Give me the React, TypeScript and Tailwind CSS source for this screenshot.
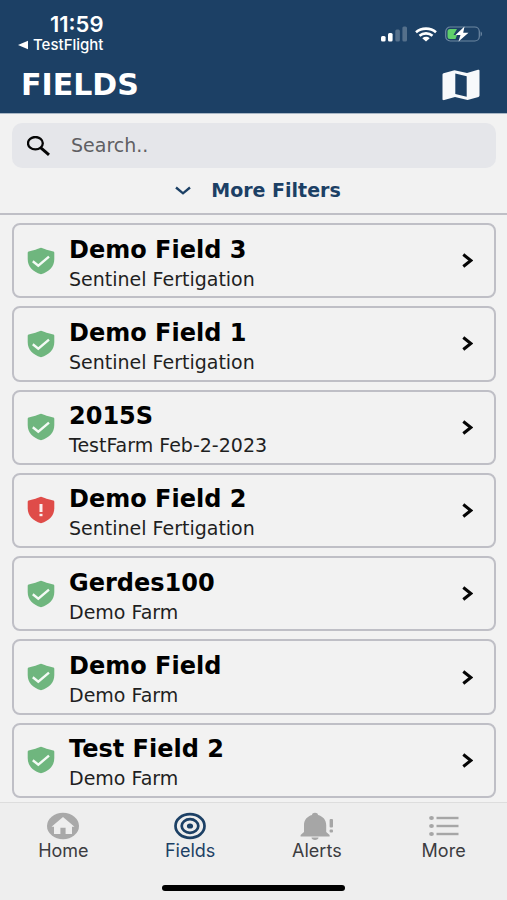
import { useState } from "react";

type FieldStatus = "ok" | "alert";

interface Field {
    id: number;
    name: string;
    farm: string;
    status: FieldStatus;
}

const fields: Field[] = [
    { id: 1, name: "Demo Field 3", farm: "Sentinel Fertigation", status: "ok" },
    { id: 2, name: "Demo Field 1", farm: "Sentinel Fertigation", status: "ok" },
    { id: 3, name: "2015S", farm: "TestFarm Feb-2-2023", status: "ok" },
    { id: 4, name: "Demo Field 2", farm: "Sentinel Fertigation", status: "alert" },
    { id: 5, name: "Gerdes100", farm: "Demo Farm", status: "ok" },
    { id: 6, name: "Demo Field", farm: "Demo Farm", status: "ok" },
    { id: 7, name: "Test Field 2", farm: "Demo Farm", status: "ok" },
];

const SignalIcon = () => (
    <svg width="26" height="16" viewBox="0 0 26 16" fill="#fff" aria-hidden="true">
        <rect x="0" y="10" width="4.6" height="5.5" rx="1.5" />
        <rect x="7" y="7" width="4.6" height="8.5" rx="1.5" />
        <rect x="14.3" y="3.5" width="4.6" height="12" rx="1.5" opacity="0.25" />
        <rect x="21.4" y="0.5" width="4.6" height="15" rx="1.5" opacity="0.25" />
    </svg>
);

const WifiIcon = () => (
    <svg width="22" height="15" viewBox="0 0 22 15" fill="none" stroke="#fff" strokeWidth="2.6" aria-hidden="true">
        <path d="M1 5.2C6.5 0.4 15.5 0.4 21 5.2" />
        <path d="M4.5 8.8C8.2 5.6 13.8 5.6 17.5 8.8" />
        <path d="M7.3 11.2C9.5 9.3 12.5 9.3 14.7 11.2L11 14.6Z" fill="#fff" stroke="none" />
    </svg>
);

const BatteryIcon = () => (
    <svg width="38" height="16" viewBox="0 0 38 16" aria-hidden="true">
        <rect x="0.7" y="1" width="33.6" height="14" rx="4.5" fill="none" stroke="#6d87a1" strokeWidth="1.2" />
        <path d="M35.6 5.6C37.4 6.2 37.4 9.8 35.6 10.4Z" fill="#6d87a1" />
        <path d="M5 3H12L8.5 9H12L10.5 13H5A2.5 2.5 0 0 1 2.5 10.5V5.5A2.5 2.5 0 0 1 5 3Z" fill="#5fcf6b" />
        <path d="M19.5 0.5L10.5 9H15.5L13.5 15.5L23.5 6.7H18.2Z" fill="#fff" />
    </svg>
);

const MapIcon = () => (
    <svg width="38" height="32" viewBox="0 0 38 32" aria-hidden="true">
        <path
            fillRule="evenodd"
            fill="#f7f9fb"
            d="M1.5 4.2L12.5 1.2L25 4L36 0.8C36.9 0.6 37.5 1 37.5 1.8V26.6C37.5 27.3 37.2 27.7 36.5 27.9L25.5 31L13 28L2.2 31.1C1.3 31.3 0.5 31 0.5 30V5.5C0.5 4.8 0.9 4.4 1.5 4.2ZM13.3 4.6V25L24.7 27.8V7.3Z"
        />
    </svg>
);

const SearchIcon = () => (
    <svg width="24" height="20" viewBox="0 0 24 20" fill="none" stroke="#050505" strokeWidth="2.3" aria-hidden="true">
        <ellipse cx="8.4" cy="7.2" rx="7.4" ry="6.2" />
        <path d="M13.6 11.6L22 18.8" strokeWidth="3" />
    </svg>
);

const ChevronDownIcon = () => (
    <svg width="16" height="9" viewBox="0 0 16 9" fill="none" stroke="#1c4065" strokeWidth="2.4" aria-hidden="true">
        <path d="M1 1.5L8 7.3L15 1.5" />
    </svg>
);

const ChevronRightIcon = () => (
    <svg width="11" height="15" viewBox="0 0 11 15" fill="none" stroke="#050505" strokeWidth="3" aria-hidden="true">
        <path d="M1.3 1.5L8.8 7.5L1.3 13.5" />
    </svg>
);

const ShieldIcon = ({ status }: { status: FieldStatus }) => (
    <svg
        width="28"
        height="28"
        viewBox="0 0 28 28"
        role="img"
        aria-label={status === "ok" ? "Healthy" : "Needs attention"}
    >
        <path
            fill={status === "ok" ? "#6fb67e" : "#df4c49"}
            d="M14 0.8C15 0.8 17 1.9 19.5 2.8C22 3.7 25.5 4.2 26.4 4.5C27.1 4.8 27.3 5.3 27.3 6V12C27.3 19.5 22.5 24.8 14 27.2C5.5 24.8 0.7 19.5 0.7 12V6C0.7 5.3 0.9 4.8 1.6 4.5C2.5 4.2 6 3.7 8.5 2.8C11 1.9 13 0.8 14 0.8Z"
        />
        {status === "ok" ? (
            <path d="M5.8 14.3L11.3 18.7L22 9.7" fill="none" stroke="#f4faf5" strokeWidth="2.4" />
        ) : (
            <>
                <rect x="12.5" y="8" width="3" height="8" fill="#fbeeee" />
                <rect x="12.5" y="17.8" width="3" height="2.4" fill="#fbeeee" />
            </>
        )}
    </svg>
);

const HomeIcon = () => (
    <svg width="32" height="28" viewBox="0 0 32 28" aria-hidden="true">
        <ellipse cx="16" cy="14" rx="16" ry="13.2" fill="#a9a9a9" />
        <path
            d="M16 5L27.5 14.8H25V22H18.6V15.8H13.4V22H7V14.8H4.5Z"
            fill="#eeeeee"
        />
    </svg>
);

const TargetIcon = () => (
    <svg width="32" height="28" viewBox="0 0 32 28" fill="none" stroke="#1c4065" strokeWidth="2.7" aria-hidden="true">
        <ellipse cx="16" cy="14" rx="14.5" ry="11.8" />
        <ellipse cx="16" cy="14" rx="8.3" ry="6.8" />
        <ellipse cx="16" cy="14" rx="3.1" ry="2.6" fill="#1c4065" stroke="none" />
    </svg>
);

const BellIcon = () => (
    <svg width="34" height="28" viewBox="0 0 34 28" fill="#a6a6a6" aria-hidden="true">
        <path d="M15 0.8C16.7 0.8 18 1.7 18 3C23 4.3 26.2 8 26.2 13V20L29.6 23V24.4H0.6V23L4 20V13C4 8 7.2 4.3 12 3C12 1.7 13.3 0.8 15 0.8Z" />
        <path d="M11.5 25.5H18.5C18.5 27 17 28 15 28S11.5 27 11.5 25.5Z" />
        <rect x="29.6" y="7" width="3.4" height="8.5" rx="1" />
        <rect x="29.6" y="17.5" width="3.4" height="3" rx="1" />
    </svg>
);

const ListIcon = () => (
    <svg width="30" height="28" viewBox="0 0 30 28" fill="#a6a6a6" aria-hidden="true">
        <ellipse cx="2.5" cy="6" rx="2.4" ry="2" />
        <ellipse cx="2.5" cy="14" rx="2.4" ry="2" />
        <ellipse cx="2.5" cy="22" rx="2.4" ry="2" />
        <rect x="7.5" y="4.8" width="22" height="2.4" />
        <rect x="7.5" y="12.8" width="22" height="2.4" />
        <rect x="7.5" y="20.8" width="22" height="2.4" />
    </svg>
);

const tabs = [
    { label: "Home", icon: <HomeIcon /> },
    { label: "Fields", icon: <TargetIcon /> },
    { label: "Alerts", icon: <BellIcon /> },
    { label: "More", icon: <ListIcon /> },
];

const Header = () => (
    <header className="bg-[#1c4065] text-white border-b border-[#a9b7c5] pt-3 pb-[7px]">
        <div className="flex items-start justify-between pl-[18px] pr-6">
            <div className="flex flex-col items-end font-['Inter',sans-serif]">
                <span className="text-[22px] leading-6 font-semibold">11:59</span>
                <button
                    type="button"
                    className="flex items-center gap-1 text-[15px] leading-[18px] font-medium"
                >
                    <svg width="11" height="10" viewBox="0 0 11 10" aria-hidden="true">
                        <path d="M0 5L10 0.8V9.2Z" fill="#fff" />
                    </svg>
                    TestFlight
                </button>
            </div>
            <div className="flex items-center gap-2 pt-[14px]">
                <SignalIcon />
                <WifiIcon />
                <BatteryIcon />
            </div>
        </div>
        <div className="flex items-center justify-between pl-[21px] pr-[27px] pt-[10px]">
            <h1 className="text-[30px] leading-[42px] font-bold">FIELDS</h1>
            <button type="button" aria-label="Show map">
                <MapIcon />
            </button>
        </div>
    </header>
);

const FieldCard = ({ field }: { field: Field }) => (
    <li className="flex flex-1">
        <button
            type="button"
            className="flex flex-1 items-center rounded-lg border-2 border-[#bfbfc6] pl-[13px] pr-[21px] text-left"
        >
            <ShieldIcon status={field.status} />
            <span className="flex flex-1 flex-col pt-[6px] pl-[14px]">
                <span className="text-[24px] leading-[30px] font-bold text-black">{field.name}</span>
                <span className="text-[19px] leading-7 text-[#1f1f1f]">{field.farm}</span>
            </span>
            <ChevronRightIcon />
        </button>
    </li>
);

const App = () => {
    const [query, setQuery] = useState("");
    const [activeTab, setActiveTab] = useState("Fields");

    const visible = fields.filter((f) =>
        f.name.toLowerCase().includes(query.toLowerCase())
    );

    return (
        <div className="flex min-h-screen flex-col bg-[#f2f2f2] font-['DejaVu_Sans',sans-serif]">
            <Header />
            <section className="border-b-2 border-[#bfbfc6] pl-3 pr-[11px] pt-[9px]">
                <label className="flex h-[45px] items-center rounded-[10px] bg-[#e5e6ea] pl-[15px]">
                    <SearchIcon />
                    <input
                        type="text"
                        aria-label="Search fields"
                        placeholder="Search.."
                        value={query}
                        onChange={(e) => setQuery(e.target.value)}
                        className="min-w-0 flex-1 bg-transparent pl-5 text-[19px] text-black outline-none placeholder:text-[#5f5f63]"
                    />
                </label>
                <button
                    type="button"
                    className="mx-auto flex h-[45px] items-center gap-5 pl-2 text-[19px] font-bold text-[#1c4065]"
                >
                    <ChevronDownIcon />
                    More Filters
                </button>
            </section>
            <main className="flex flex-1 flex-col">
                <ul className="flex flex-1 flex-col gap-2 pl-3 pr-[11px] pt-2 pb-1">
                    {visible.map((field) => (
                        <FieldCard key={field.id} field={field} />
                    ))}
                </ul>
            </main>
            <nav className="border-t border-[#dddddd] bg-[#eeeeee] pt-[9px] font-['Inter',sans-serif]">
                <div className="grid grid-cols-4">
                    {tabs.map((tab) => (
                        <button
                            key={tab.label}
                            type="button"
                            onClick={() => setActiveTab(tab.label)}
                            className={
                                activeTab === tab.label
                                    ? "flex flex-col items-center text-[18px] leading-[22px] text-[#1c4065]"
                                    : "flex flex-col items-center text-[18px] leading-[22px] text-[#3c3c40]"
                            }
                        >
                            {tab.icon}
                            {tab.label}
                        </button>
                    ))}
                </div>
                <div className="mx-auto mt-[23px] mb-[9px] h-[6px] w-9/25 rounded-full bg-black" />
            </nav>
        </div>
    );
};

export default App;
